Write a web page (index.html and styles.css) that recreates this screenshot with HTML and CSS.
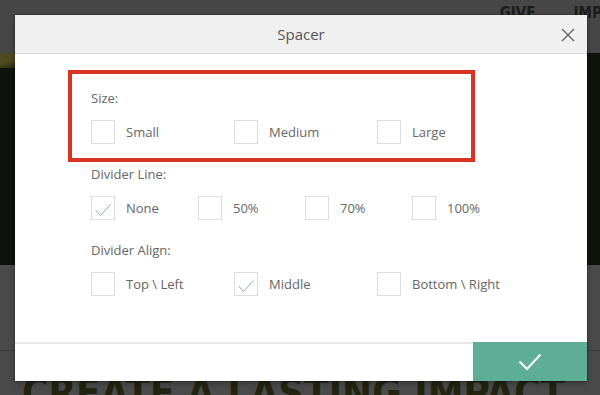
FILE: index.html
```html
<!DOCTYPE html>
<html>
<head>
<meta charset="utf-8">
<link rel="stylesheet" href="styles.css">
</head>
<body>
<div class="page">
  <div class="topbar">
    <span class="nav-item">GIVE</span>
    <span class="nav-item nav-last">IMPACT</span>
  </div>
  <div class="hero"><div class="hero-accent"></div></div>
  <div class="section"></div>
  <div class="headline">CREATE A LASTING IMPACT</div>
</div>

<div class="modal">
  <div class="modal-header">
    <span></span>
    <span class="modal-title">Spacer</span>
    <span class="close">
      <svg width="14" height="14" viewBox="0 0 14 14"><path d="M1 1L13 13M13 1L1 13" stroke="#666" stroke-width="1.4" fill="none"/></svg>
    </span>
  </div>
  <div class="modal-body">
    <div class="group">
      <div class="group-label">Size:</div>
      <div class="row row-3">
        <label class="option"><span class="box"></span>Small</label>
        <label class="option"><span class="box"></span>Medium</label>
        <label class="option"><span class="box"></span>Large</label>
      </div>
    </div>
    <div class="group">
      <div class="group-label">Divider Line:</div>
      <div class="row row-4">
        <label class="option"><span class="box"><svg width="24" height="24" viewBox="0 0 24 24"><path d="M4.5 14L9.5 19.5L19.5 8.5" stroke="#7fb8a4" stroke-width="1" fill="none"/></svg></span>None</label>
        <label class="option"><span class="box"></span>50%</label>
        <label class="option"><span class="box"></span>70%</label>
        <label class="option"><span class="box"></span>100%</label>
      </div>
    </div>
    <div class="group">
      <div class="group-label">Divider Align:</div>
      <div class="row row-3">
        <label class="option"><span class="box"></span>Top \ Left</label>
        <label class="option"><span class="box"><svg width="24" height="24" viewBox="0 0 24 24"><path d="M4.5 14L9.5 19.5L19.5 8.5" stroke="#7fb8a4" stroke-width="1" fill="none"/></svg></span>Middle</label>
        <label class="option"><span class="box"></span>Bottom \ Right</label>
      </div>
    </div>
    <div class="highlight"></div>
  </div>
  <div class="modal-footer">
    <div class="footer-space"></div>
    <div class="confirm">
      <svg width="24" height="18" viewBox="0 0 24 18"><path d="M1.5 8.5L9 16L22.5 1.5" stroke="#fff" stroke-width="2" fill="none"/></svg>
    </div>
  </div>
</div>
</body>
</html>
```

FILE: styles.css
```css
html, body {
  margin: 0;
  padding: 0;
}
body {
  width: 600px;
  height: 395px;
  overflow: hidden;
  background: #4a4a4a;
  position: relative;
  font-family: "Open Sans", "DejaVu Sans", sans-serif;
}
.page {
  display: flex;
  flex-direction: column;
}
.topbar {
  height: 53px;
  background: #474747;
  display: flex;
  justify-content: flex-end;
  gap: 38px;
  overflow: hidden;
  white-space: nowrap;
}
.nav-item {
  font-family: "DejaVu Sans Condensed", "DejaVu Sans", sans-serif;
  font-stretch: condensed;
  font-weight: bold;
  font-size: 15px;
  line-height: 15px;
  padding-top: 6px;
  color: #1c1c1c;
}
.nav-last {
  margin-right: -30px;
}
.hero {
  height: 212px;
  background: #10120c;
}
.hero-accent {
  width: 16px;
  height: 15px;
  background: linear-gradient(160deg, #4e4b1e 0, #4e4b1e 55%, #23240f 100%);
}
.section {
  height: 85px;
  background: #4a4a4a;
  border-bottom: 1px solid #3c3c3c;
}
.headline {
  margin-top: 22px;
  padding-left: 22px;
  font-family: "DejaVu Sans Condensed", "DejaVu Sans", sans-serif;
  font-stretch: condensed;
  font-weight: bold;
  font-size: 40px;
  line-height: 40px;
  color: #22240f;
  white-space: nowrap;
}

.modal {
  position: absolute;
  left: 15px;
  top: 15px;
  width: 572px;
  height: 366px;
  background: #fff;
  display: flex;
  flex-direction: column;
  box-shadow: 0 0 0 1px rgba(0,0,0,0.15), 0 2px 6px rgba(0,0,0,0.3);
}
.modal-header {
  height: 38px;
  flex: none;
  background: #f0f0f0;
  border-bottom: 1px solid #dcdcdc;
  display: grid;
  grid-template-columns: 1fr auto 1fr;
  align-items: center;
}
.modal-title {
  font-size: 15px;
  color: #555;
  line-height: 20px;
}
.close {
  justify-self: end;
  margin-right: 12px;
  display: flex;
  margin-top: 1px;
}
.modal-body {
  flex: 1;
  position: relative;
  padding: 35px 0 0 76px;
}
.group {
  margin-bottom: 21px;
}
.group-label {
  font-size: 13px;
  line-height: 18px;
  color: #666;
  margin-bottom: 13px;
}
.row {
  display: grid;
}
.row-3 {
  grid-template-columns: repeat(3, 143px);
}
.row-4 {
  grid-template-columns: repeat(4, 107px);
}
.option {
  display: flex;
  align-items: center;
  gap: 11px;
  font-size: 13px;
  color: #666;
  height: 24px;
}
.box {
  width: 24px;
  height: 24px;
  box-sizing: border-box;
  border: 1px solid #dcdcdc;
  background: #fff;
  display: flex;
  align-items: center;
  justify-content: center;
  flex: none;
}
.box svg {
  margin: -1px;
}
.highlight {
  position: absolute;
  left: 53px;
  top: 16px;
  width: 407px;
  height: 92px;
  box-sizing: border-box;
  border: 4px solid #d8331f;
}
.modal-footer {
  height: 39px;
  flex: none;
  display: flex;
}
.footer-space {
  flex: 1;
  border-top: 2px solid #e8e8e8;
}
.confirm {
  width: 114px;
  background: #5dae94;
  display: flex;
  align-items: center;
  justify-content: center;
}
```
